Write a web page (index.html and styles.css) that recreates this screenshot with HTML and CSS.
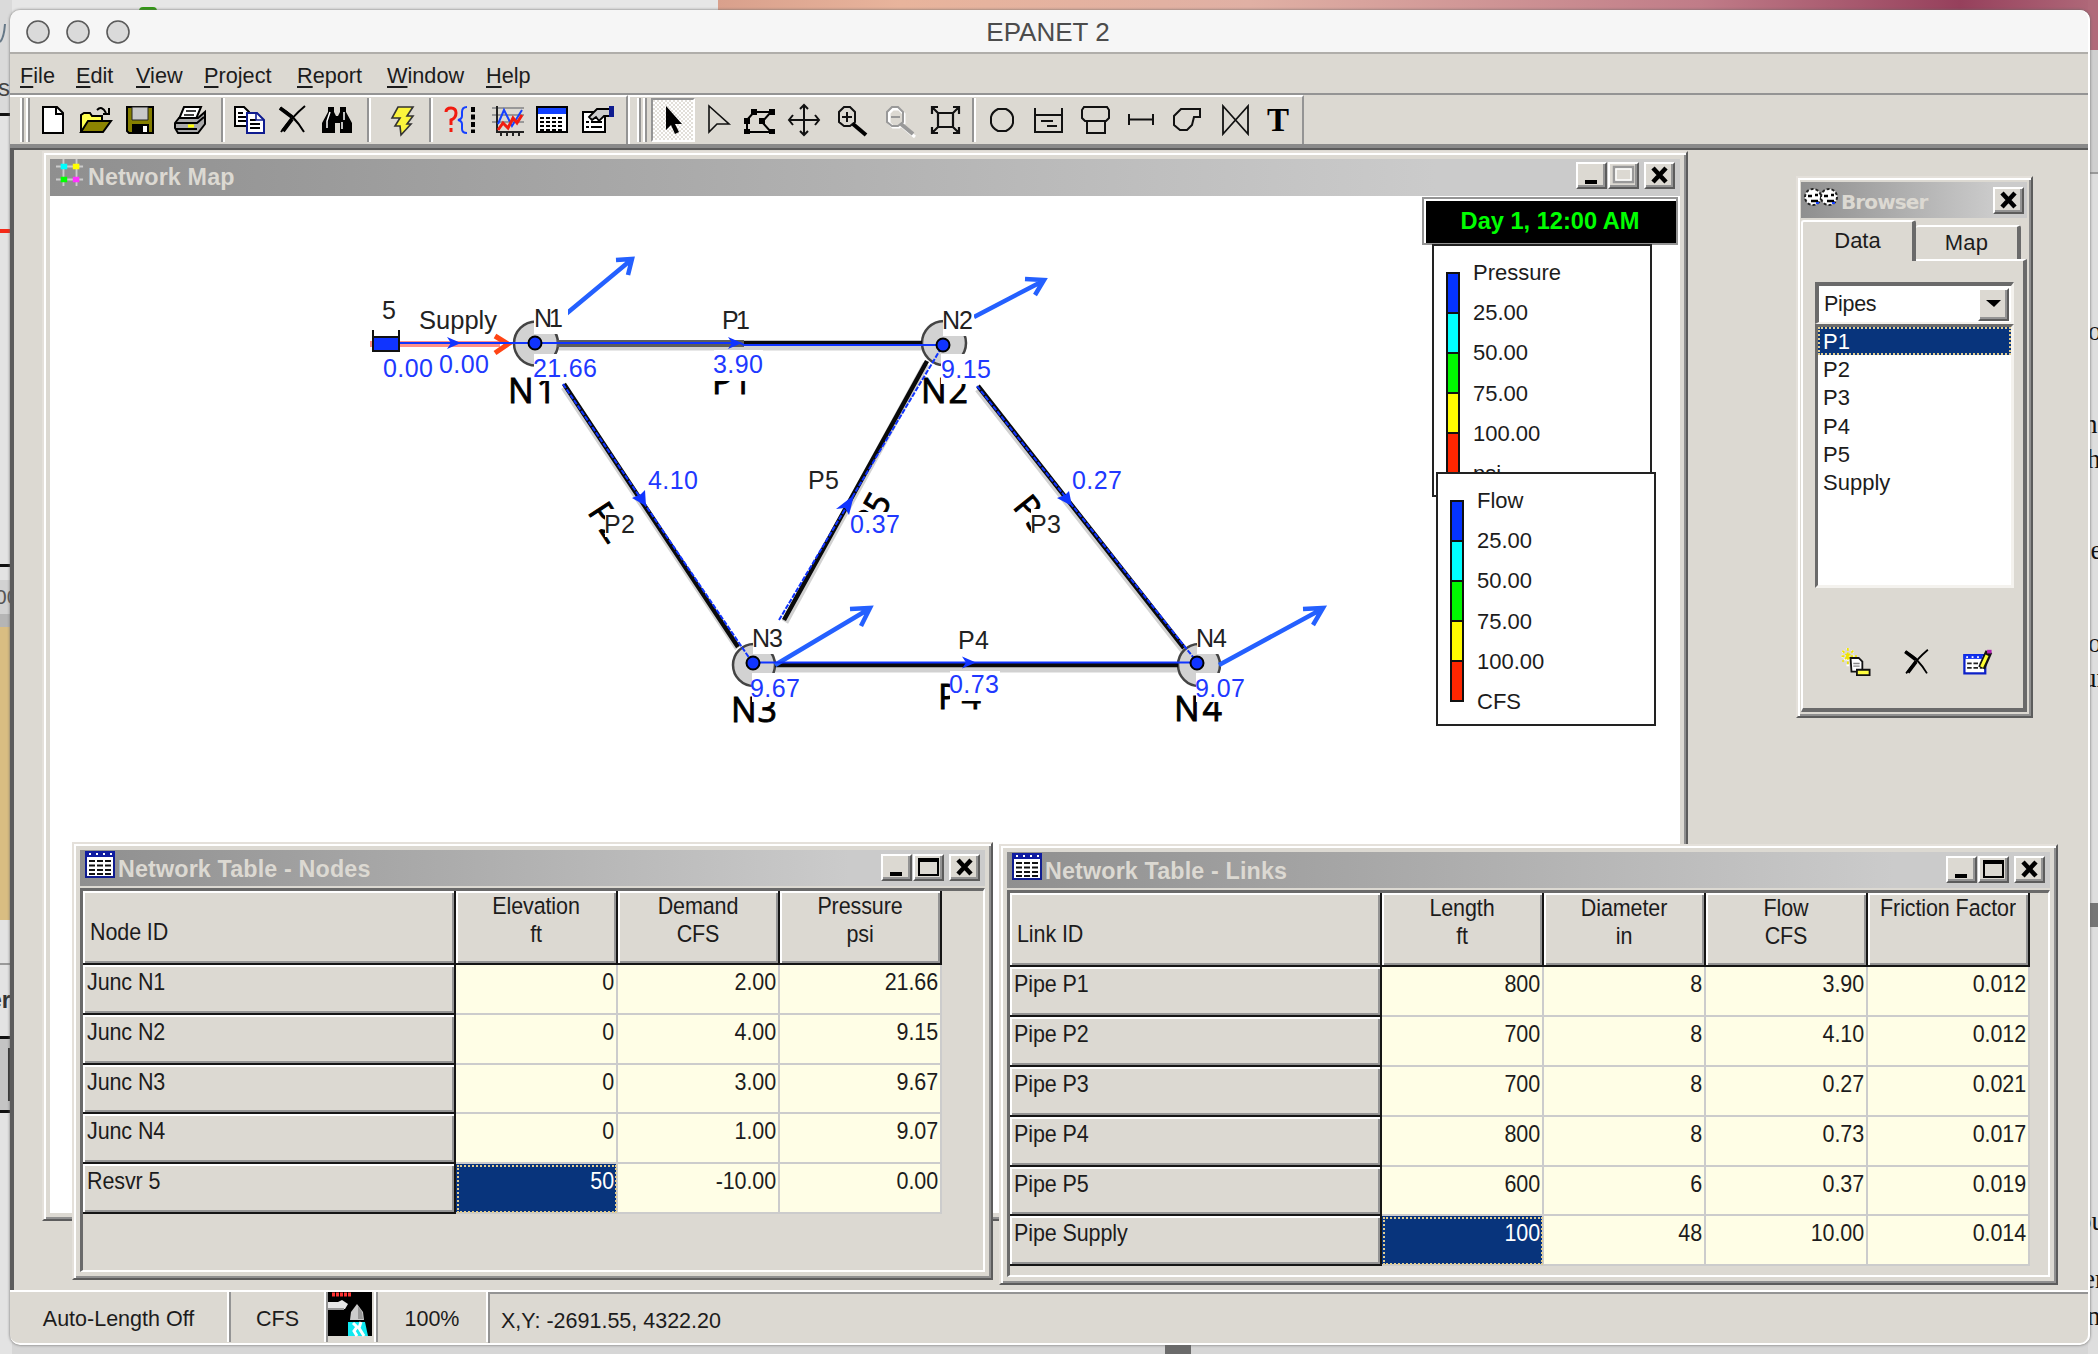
FILE: index.html
```html
<!DOCTYPE html>
<html lang="en">
<head>
<meta charset="utf-8">
<title>EPANET 2</title>
<link rel="stylesheet" href="styles.css">
</head>
<body>
<div class="backdrop">
  <div class="strip-top"></div>
  <div class="green-tab"></div>
  <svg class="edge-left" width="12" height="1354" viewBox="0 0 12 1354">
    <rect width="12" height="1354" fill="#e3e3e3"/>
    <rect y="0" width="12" height="113" fill="#dadada"/>
    <path d="M0 42Q4 38 5 24" stroke="#667887" stroke-width="2" fill="none"/>
    <text x="-2" y="96" font-size="24" fill="#444">s</text>
    <rect y="113" width="12" height="3" fill="#111"/>
    <rect y="229" width="12" height="4" fill="#f52a18"/>
    <rect y="564" width="12" height="3" fill="#111"/>
    <rect y="580" width="12" height="34" fill="#d2d2d2"/>
    <text x="-5" y="604" font-size="21" fill="#555">00</text>
    <rect y="614" width="12" height="13" fill="#b5b5b5"/>
    <rect y="627" width="12" height="293" fill="#d9bd82"/>
    <rect y="963" width="12" height="2" fill="#999"/>
    <text x="-11" y="1008" font-size="23" font-weight="bold" fill="#333">er</text>
    <rect y="1036" width="12" height="3" fill="#111"/>
    <rect y="1039" width="12" height="71" fill="#c4c4c4"/>
    <rect x="8" y="1048" width="3" height="53" fill="#333"/>
    <rect y="1110" width="12" height="3" fill="#111"/>
  </svg>
  <svg class="edge-right" width="10" height="1354" viewBox="0 0 10 1354">
    <rect width="10" height="1354" fill="#dedede"/>
    <rect width="10" height="50" fill="#b06a7a"/>
    <rect y="50" width="10" height="122" fill="#cfcfcf"/>
    <rect y="172" width="10" height="2" fill="#999"/>
    <g font-family="Liberation Serif, serif" font-size="27" fill="#111">
      <text x="0" y="340">o</text><text x="-4" y="433">n</text><text x="-1" y="468">h</text>
      <text x="-5" y="559">le</text><text x="0" y="652">o</text><text x="-5" y="687">ur</text>
      <text x="-10" y="1230">ou</text><text x="-5" y="1288">er</text><text x="-1" y="1325">n</text>
    </g>
    <rect y="903" width="10" height="24" fill="#767676"/>
  </svg>
  <div class="thumb-bottom"></div>
</div>

<div class="app">
  <header class="mac-title">
    <svg class="lights" width="120" height="26" viewBox="0 0 120 26"><g fill="#dadada" stroke="#5a5a5a" stroke-width="1.6"><circle cx="14" cy="13" r="11"/><circle cx="54" cy="13" r="11"/><circle cx="94" cy="13" r="11"/></g></svg>
    <span>EPANET 2</span>
  </header>
  <nav class="menu">
    <span><u>F</u>ile</span><span><u>E</u>dit</span><span><u>V</u>iew</span><span><u>P</u>roject</span><span><u>R</u>eport</span><span><u>W</u>indow</span><span><u>H</u>elp</span>
  </nav>
  <div class="toolbars">
    <div class="bar bar-main">
      <i class="grip"></i>
      <svg viewBox="0 0 32 32"><path d="M6 3h14l6 6v20H6z" fill="#fff" stroke="#000" stroke-width="2"/><path d="M19 3v7h7" fill="none" stroke="#000" stroke-width="2"/></svg>
      <svg viewBox="0 0 32 32"><path d="M2 28V11l3-2h6l2 3h10v5" fill="#ffff50" stroke="#000" stroke-width="2"/><path d="M2 28l7-11h23l-8 11z" fill="#8c8400" stroke="#000" stroke-width="2"/><path d="M18 6q5-5 9 3M30 4v6h-6" fill="none" stroke="#000" stroke-width="2"/></svg>
      <svg viewBox="0 0 32 32"><path d="M3 3h26v26H5l-2-2z" fill="#857f00" stroke="#000" stroke-width="2"/><path d="M8 3h16v13H8z" fill="#c8c8c8" stroke="#222" stroke-width="1"/><path d="M8 20h17v9H8z" fill="#000"/><path d="M19 22h4v6h-4z" fill="#fff"/></svg>
      <svg viewBox="0 0 32 32"><path d="M10 3h17l-5 12H5z" fill="#fff" stroke="#000" stroke-width="2"/><path d="M12 7h10M10 11h10" stroke="#000" stroke-width="1.5"/><path d="M5 14h19l7-6v12l-7 9H4l-3-5v-5z" fill="#aaa" stroke="#000" stroke-width="2"/><path d="M1 19h22l7-6M2 25h21" stroke="#000" stroke-width="2" fill="none"/><path d="M14 22h6" stroke="#ff0" stroke-width="3"/></svg>
      <i class="sep"></i>
      <svg viewBox="0 0 32 32"><path d="M2 3h9l5 5v14H2z" fill="#fff" stroke="#000" stroke-width="2"/><path d="M5 9h5M5 13h8M5 17h8" stroke="#000" stroke-width="2"/><path d="M14 9h10l7 7v13H14z" fill="#fff" stroke="#0f1c90" stroke-width="2"/><path d="M17 16h6M17 20h10M17 24h10" stroke="#000" stroke-width="2"/><path d="M23 9v7h8" fill="none" stroke="#0f1c90" stroke-width="1.6"/></svg>
      <svg viewBox="0 0 32 32"><path d="M3 4q14 7 24 24M28 2Q16 12 4 28" fill="none" stroke="#000" stroke-width="2"/><path d="M3 4l12 9M15 15L6 27" stroke="#000" stroke-width="4"/></svg>
      <svg viewBox="0 0 32 32"><path d="M7 3h6v5l2 4h2l2-4V3h6v5l6 11v10H19V19h-5v10H1V19L7 8z"/><path d="M9 8l-3 9v7M23 8v8M21 18v7" stroke="#fff" stroke-width="1.5" fill="none"/></svg>
      <i class="sep"></i>
      <svg viewBox="0 0 32 32"><path d="M12 3h15l-6 9h6l-6 8h4L15 31l-1-9H9l5-8H6z" fill="#fbf43c" stroke="#333" stroke-width="1.6"/></svg>
      <i class="sep"></i>
      <svg viewBox="0 0 32 32"><path d="M2 8q0-4 5-4t5 5-5 7v5M7 24v4" fill="none" stroke="#f21c10" stroke-width="3"/><path d="M23 3q-5 0-5 5v4q0 3-4 4 4 1 4 4v5q0 4 5 4" fill="none" stroke="#1540ff" stroke-width="2"/><path d="M29 3v26" stroke="#000" stroke-width="4" stroke-dasharray="5 2.5"/></svg>
      <svg viewBox="0 0 32 32"><path d="M0 4h32M0 11h32M0 18h32" stroke="#999" stroke-width="2"/><path d="M5 2v26h27M9 28v4M15 28v4M21 28v4M27 28v4" fill="none" stroke="#222" stroke-width="2"/><path d="M6 20l6-14 8 16L30 6" fill="none" stroke="#1540ff" stroke-width="2"/><path d="M6 26l5-7 5 5 5-10 4 5 5-8" fill="none" stroke="#f21c10" stroke-width="3"/></svg>
      <svg viewBox="0 0 32 32"><path d="M1 3h30v25H1z" fill="#fff" stroke="#000" stroke-width="2"/><path d="M2 4h28v6H2z" fill="#1040ff"/><path d="M4 14h24M4 18h24M4 22h24M4 26h24" stroke="#000" stroke-width="1.8" stroke-dasharray="4 2"/></svg>
      <svg viewBox="0 0 32 32"><path d="M1 8h22v20H1z" fill="#fff" stroke="#000" stroke-width="2"/><path d="M4 18h3M4 23h3M9 18h11M9 23h11" stroke="#000" stroke-width="2"/><path d="M7 13l8-8h13v7h-6l-5 5-3-4-4 3z" fill="#ccc" stroke="#000" stroke-width="1.8"/><path d="M27 2h5v11h-5z" fill="#0f1c90"/></svg>
    </div>
    <div class="bar bar-map">
      <i class="grip"></i>
      <b class="pressed"><svg viewBox="0 0 32 32"><path d="M9 2v24l5-5 4 9 4-2-4-8h7z"/></svg></b>
      <svg viewBox="0 0 32 32"><path d="M6 2v26l8-8h12z" fill="none" stroke="#111" stroke-width="1.6"/></svg>
      <svg viewBox="0 0 32 32"><path d="M3 28V16l7-8h17l-9 10 9 10z" fill="none" stroke="#000" stroke-width="2"/><path d="M7 5h6v6H7zM25 5h6v6h-6zM0 14h6v6H0zM15 14h6v6h-6zM0 25h6v5H0zM25 25h6v5h-6z"/></svg>
      <svg viewBox="0 0 32 32"><path d="M16 1v30M1 16h30M12 5l4-4 4 4M12 27l4 4 4-4M5 11l-4 5 4 5M27 11l4 5-4 5" fill="none" stroke="#111" stroke-width="2"/></svg>
      <svg viewBox="0 0 32 32"><path d="M8 3h6l5 5v10l-5 4H8l-5-4V8zM11 8v10M6 13h10" fill="none" stroke="#111" stroke-width="2"/><path d="M17 20l13 11" stroke="#000" stroke-width="4"/></svg>
      <svg viewBox="0 0 32 32"><path d="M9 5h6l5 5v9l-5 4H9l-4-4V9zM18 22l13 11" stroke="#fff" stroke-width="3" fill="none"/><path d="M8 3h6l5 5v10l-5 4H8l-5-4V8zM7 13h9" fill="none" stroke="#999" stroke-width="2"/><path d="M17 20l12 10" stroke="#999" stroke-width="4"/></svg>
      <svg viewBox="0 0 32 32"><path d="M8 9h15v14H8zM2 10V3h6M2 3l6 6M29 10V3h-6M29 3l-6 6M2 23v6h6M2 29l6-6M29 23v6h-6M29 29l-6-6" fill="none" stroke="#111" stroke-width="2.2"/></svg>
      <i class="sep"></i>
      <svg viewBox="0 0 32 32"><path d="M12 5h8q6 3 7 8v6q-1 5-7 8h-8q-6-3-7-8v-6q1-5 7-8z" fill="none" stroke="#111" stroke-width="2"/></svg>
      <svg viewBox="0 0 32 32"><path d="M3 4v24h27V4M3 11h27M9 17h12M15 22h10" fill="none" stroke="#111" stroke-width="2"/></svg>
      <svg viewBox="0 0 32 32"><path d="M4 3h23l2 3v8l-3 3H5l-3-3V6zM7 17h18v12H7z" fill="none" stroke="#111" stroke-width="2"/></svg>
      <svg viewBox="0 0 32 32"><path d="M4 10v11M28 10v11M4 15.500h24" fill="none" stroke="#111" stroke-width="2"/></svg>
      <svg viewBox="0 0 32 32"><path d="M11 5h19v8h-6l-2 8-5 5h-7l-6-5v-9z" fill="none" stroke="#111" stroke-width="2"/></svg>
      <svg viewBox="0 0 32 32"><path d="M4 2v28L29 2v28z" fill="none" stroke="#111" stroke-width="1.8"/></svg>
      <span class="tee">T</span>
    </div>
  </div>

  <main class="mdi">
    <section class="win map-win">
      <div class="cap">
        <svg class="ico" viewBox="0 0 30 30"><path d="M8 0v29M22 0v29M0 8h29M0 22h29" stroke="#ccc" stroke-width="2"/><path d="M5 5h7v6H5z" fill="#0ff"/><path d="M18 5h7v6h-7z" fill="#ff0"/><path d="M5 19h7v6H5z" fill="#0f0"/><path d="M18 19h7v6h-7z" fill="#f3f"/></svg>
        <h2>Network Map</h2>
        <b class="btn"><svg viewBox="0 0 24 20"><path d="M5 17h12" stroke="#000" stroke-width="4"/></svg></b><b class="btn"><svg viewBox="0 0 24 20"><path d="M2 2h19v15H2z" fill="none" stroke="#999" stroke-width="2.500"/><path d="M4 4h15v11H4z" fill="none" stroke="#fff" stroke-width="1.5"/></svg></b><b class="btn close"><svg viewBox="0 0 24 20"><path d="M5 3l13 14M18 3L5 17" stroke="#000" stroke-width="4.500"/></svg></b>
      </div>
      <div class="map">
        <svg class="net" viewBox="50 195 1630 1018" width="1630" height="1018">
          <g stroke="#000" stroke-opacity=".18" stroke-width="7" fill="none">
            <path d="M557 347H922M775 669H1178M564 387L738 648M785 622L926 364M978 389L1184 651"/>
          </g>
          <g fill="#d2d2d2" stroke="#444" stroke-width="2.500">
            <circle cx="536" cy="343.500" r="22"/><circle cx="944" cy="343" r="22"/><circle cx="754" cy="665" r="21"/><circle cx="1199" cy="665" r="21"/>
          </g>
          <path d="M370 344H500" stroke="#ff9088" stroke-width="6"/>
          <path d="M495 336L508 344L495 353" fill="none" stroke="#ff4515" stroke-width="5"/>
          <path d="M557 343.500H744" stroke="#5c5c5c" stroke-width="7"/>
          <g stroke="#0a0a0a" stroke-width="4.500" fill="none">
            <path d="M744 343H922M775 665H1178M564 384L738 647M784 620L927 361M978 386L1184 648"/>
          </g>
          <g stroke="#2460ff" stroke-width="4.500" fill="none">
            <path d="M566 314L631 260M616 260L632 259L628 275M974 317L1043 281M1025 279L1044 280L1035 295M775 665L869 609M850 609L870 608L861 626M1219 665L1322 609M1303 609L1323 608L1313 625"/>
          </g>
          <g font-family="Open Sans, sans-serif" font-size="34" fill="#000" stroke="#000" stroke-width=".9">
            <text x="508" y="403" textLength="48">N1</text><text x="921" y="403" textLength="47">N2</text><text x="731" y="722" textLength="46">N3</text><text x="1174" y="721" textLength="48">N4</text>
            <text x="712" y="394" textLength="40">P1</text><text x="938" y="709" textLength="43">P4</text>
            <text transform="translate(587 512) rotate(57)">P2</text><text transform="translate(1012 507) rotate(51)">P3</text><text transform="translate(873 536) rotate(-61)">P5</text>
          </g>
          <g fill="#fff">
            <path d="M534 305h34v29h-34zM943 306h31v30h-31zM753 624h32v30h-32zM1197 624h32v30h-32zM534 354h66v27h-66zM714 350h49v31h-49zM941 354h51v30h-51zM752 673h48v29h-48zM1196 673h48v29h-48zM950 671h50v30h-50zM850 512h51v27h-51zM605 509h30v28h-30zM1031 509h30v28h-30z"/>
          </g>
          <g stroke="#1034ff" stroke-width="2" fill="none">
            <path d="M372 343H535M535 343H740L744 345H943M752 662.500H1197"/>
            <path d="M563 384L752 662M779 620L943 345M977 386L1197 662" stroke-dasharray="5 1.500"/>
          </g>
          <g fill="#1034ff">
            <path d="M447 337l14 6-14 6 4-6zM728 337l14 6-14 6 4-6zM962 656.500l14 6-14 6 4-6zM646 506l-1-16-4 4-9 4zM854 495l-18 14 9-1 4 7zM1072 506l-3-15-4 4-8 3z"/>
          </g>
          <path d="M373 330V350H399V330" fill="none" stroke="#111" stroke-width="2"/><path d="M373 337h26v14h-26z" fill="#1034ff" stroke="#111" stroke-width="2"/>
          <g fill="#1034ff" stroke="#000" stroke-width="2"><circle cx="535" cy="343" r="6.500"/><circle cx="943" cy="345" r="6.500"/><circle cx="753" cy="663" r="6.500"/><circle cx="1197" cy="663" r="6.500"/></g>
          <g class="lbl" fill="#222">
            <text x="382" y="319">5</text><text x="419" y="329" textLength="78" lengthAdjust="spacingAndGlyphs">Supply</text>
            <text x="534" y="327" textLength="29">N1</text><text x="942" y="329" textLength="31">N2</text><text x="752" y="647" textLength="31">N3</text><text x="1196" y="647" textLength="31">N4</text>
            <text x="722" y="329" textLength="28">P1</text><text x="604" y="533" textLength="31">P2</text><text x="1030" y="533" textLength="31">P3</text><text x="958" y="649" textLength="31">P4</text><text x="808" y="489" textLength="31">P5</text>
          </g>
          <g class="lbl" fill="#2038ff">
            <text x="383" y="377" textLength="50">0.00</text><text x="439" y="373" textLength="50">0.00</text><text x="533" y="377" textLength="64">21.66</text><text x="713" y="373" textLength="50">3.90</text><text x="941" y="378" textLength="50">9.15</text>
            <text x="648" y="489" textLength="50">4.10</text><text x="850" y="533" textLength="50">0.37</text><text x="1072" y="489" textLength="50">0.27</text><text x="750" y="697" textLength="50">9.67</text><text x="949" y="693" textLength="50">0.73</text><text x="1195" y="697" textLength="50">9.07</text>
          </g>
        </svg>
        <div class="clock">Day 1, 12:00 AM</div>
        <div class="legend l-press"><i class="scale"><i></i><i></i><i></i><i></i><i></i></i><ul><li>Pressure</li><li>25.00</li><li>50.00</li><li>75.00</li><li>100.00</li><li>psi</li></ul></div>
        <div class="legend l-flow"><i class="scale"><i></i><i></i><i></i><i></i><i></i></i><ul><li>Flow</li><li>25.00</li><li>50.00</li><li>75.00</li><li>100.00</li><li>CFS</li></ul></div>
      </div>
    </section>

    <section class="win nodes-win">
      <div class="cap">
        <svg class="ico" viewBox="0 0 30 28"><path d="M1 1h28v25H1z" fill="#fff" stroke="#0f1c90" stroke-width="2"/><path d="M0 0h30v6H0z" fill="#0f1ca0"/><path d="M4 3h24" stroke="#fff" stroke-width="2" stroke-dasharray="2 5"/><path d="M4 10h23M4 14.500h23M4 19h23M4 23h23" stroke="#111" stroke-width="2" stroke-dasharray="6 2"/></svg>
        <h2>Network Table - Nodes</h2>
        <b class="btn"><svg viewBox="0 0 24 20"><path d="M5 17h12" stroke="#000" stroke-width="4"/></svg></b><b class="btn"><svg viewBox="0 0 24 20"><path d="M2 2h19v16H2z" fill="none" stroke="#000" stroke-width="2"/><path d="M1 3h21" stroke="#000" stroke-width="4"/></svg></b><b class="btn close"><svg viewBox="0 0 24 20"><path d="M5 3l13 14M18 3L5 17" stroke="#000" stroke-width="4.500"/></svg></b>
      </div>
      <div class="sheet">
        <div class="grid g-nodes">
          <div class="h id"><span>Node ID</span></div><div class="h"><span>Elevation<br>ft</span></div><div class="h"><span>Demand<br>CFS</span></div><div class="h"><span>Pressure<br>psi</span></div>
          <div class="r"><span>Junc N1</span></div><div class="c"><span>0</span></div><div class="c"><span>2.00</span></div><div class="c"><span>21.66</span></div>
          <div class="r"><span>Junc N2</span></div><div class="c"><span>0</span></div><div class="c"><span>4.00</span></div><div class="c"><span>9.15</span></div>
          <div class="r"><span>Junc N3</span></div><div class="c"><span>0</span></div><div class="c"><span>3.00</span></div><div class="c"><span>9.67</span></div>
          <div class="r"><span>Junc N4</span></div><div class="c"><span>0</span></div><div class="c"><span>1.00</span></div><div class="c"><span>9.07</span></div>
          <div class="r"><span>Resvr 5</span></div><div class="c sel"><span>50</span></div><div class="c"><span>-10.00</span></div><div class="c"><span>0.00</span></div>
        </div>
      </div>
    </section>

    <section class="win links-win">
      <div class="cap">
        <svg class="ico" viewBox="0 0 30 28"><path d="M1 1h28v25H1z" fill="#fff" stroke="#0f1c90" stroke-width="2"/><path d="M0 0h30v6H0z" fill="#0f1ca0"/><path d="M4 3h24" stroke="#fff" stroke-width="2" stroke-dasharray="2 5"/><path d="M4 10h23M4 14.500h23M4 19h23M4 23h23" stroke="#111" stroke-width="2" stroke-dasharray="6 2"/></svg>
        <h2>Network Table - Links</h2>
        <b class="btn"><svg viewBox="0 0 24 20"><path d="M5 17h12" stroke="#000" stroke-width="4"/></svg></b><b class="btn"><svg viewBox="0 0 24 20"><path d="M2 2h19v16H2z" fill="none" stroke="#000" stroke-width="2"/><path d="M1 3h21" stroke="#000" stroke-width="4"/></svg></b><b class="btn close"><svg viewBox="0 0 24 20"><path d="M5 3l13 14M18 3L5 17" stroke="#000" stroke-width="4.500"/></svg></b>
      </div>
      <div class="sheet">
        <div class="grid g-links">
          <div class="h id"><span>Link ID</span></div><div class="h"><span>Length<br>ft</span></div><div class="h"><span>Diameter<br>in</span></div><div class="h"><span>Flow<br>CFS</span></div><div class="h"><span>Friction Factor<br>&nbsp;</span></div>
          <div class="r"><span>Pipe P1</span></div><div class="c"><span>800</span></div><div class="c"><span>8</span></div><div class="c"><span>3.90</span></div><div class="c"><span>0.012</span></div>
          <div class="r"><span>Pipe P2</span></div><div class="c"><span>700</span></div><div class="c"><span>8</span></div><div class="c"><span>4.10</span></div><div class="c"><span>0.012</span></div>
          <div class="r"><span>Pipe P3</span></div><div class="c"><span>700</span></div><div class="c"><span>8</span></div><div class="c"><span>0.27</span></div><div class="c"><span>0.021</span></div>
          <div class="r"><span>Pipe P4</span></div><div class="c"><span>800</span></div><div class="c"><span>8</span></div><div class="c"><span>0.73</span></div><div class="c"><span>0.017</span></div>
          <div class="r"><span>Pipe P5</span></div><div class="c"><span>600</span></div><div class="c"><span>6</span></div><div class="c"><span>0.37</span></div><div class="c"><span>0.019</span></div>
          <div class="r"><span>Pipe Supply</span></div><div class="c sel"><span>100</span></div><div class="c"><span>48</span></div><div class="c"><span>10.00</span></div><div class="c"><span>0.014</span></div>
        </div>
      </div>
    </section>

    <section class="win browser-win">
      <div class="cap">
        <svg class="ico" viewBox="0 0 34 22"><g fill="#fff" stroke="#222" stroke-width="2" stroke-dasharray="3 2"><circle cx="9" cy="10" r="8"/><circle cx="25" cy="10" r="8"/></g><path d="M4 9h4M11 8h3M20 9h4M27 8h3M7 14h7M23 14h7" stroke="#000" stroke-width="2.500"/><path d="M12 16h3M28 16h3" stroke="#1540ff" stroke-width="2"/></svg>
        <h2>Browser</h2>
        <b class="btn close"><svg viewBox="0 0 24 20"><path d="M5 3l13 14M18 3L5 17" stroke="#000" stroke-width="4.500"/></svg></b>
      </div>
      <div class="tabs"><span class="on">Data</span><span>Map</span></div>
      <div class="pane">
        <div class="combo"><span>Pipes</span><b class="btn drop"><svg viewBox="0 0 24 20"><path d="M4 6h15l-7 7z"/></svg></b></div>
        <ul class="list"><li class="on">P1</li><li>P2</li><li>P3</li><li>P4</li><li>P5</li><li>Supply</li></ul>
        <div class="acts">
          <svg viewBox="0 0 32 32"><path d="M7 0v20M0 9h17M1 3l13 13M13 3L1 15" stroke="#fff" stroke-width="3" stroke-dasharray="2 4"/><path d="M7 0v20M0 9h17M1 3l13 13M13 3L1 15" stroke="#f0e400" stroke-width="2" stroke-dasharray="3 2"/><path d="M10 11h9l4 4v11H11z" fill="#fff" stroke="#111" stroke-width="2"/><path d="M13 17h7M13 20h7" stroke="#888" stroke-width="1.600"/><path d="M17 24h14v6H17z" fill="#ffff40" stroke="#111" stroke-width="2"/></svg>
          <svg viewBox="0 0 32 32"><path d="M3 4q14 7 24 24M28 2Q16 12 4 28" fill="none" stroke="#000" stroke-width="2"/><path d="M3 4l12 9M15 15L6 27" stroke="#000" stroke-width="4"/></svg>
          <svg viewBox="0 0 32 32"><path d="M1 8h23v20H1z" fill="#fff" stroke="#0c20c8" stroke-width="2.500"/><path d="M0 7h25v5H0z" fill="#1030f0"/><path d="M3 10h20" stroke="#fff" stroke-width="2" stroke-dasharray="2 4"/><path d="M4 17h17M4 22h17" stroke="#222" stroke-width="2" stroke-dasharray="5 2"/><path d="M28 4l-8 18" stroke="#111" stroke-width="8"/><path d="M26 8l-6 13" stroke="#ff3" stroke-width="3.500"/><path d="M26 2h5v4h-5z" fill="#b020b0"/></svg>
        </div>
      </div>
    </section>
  </main>

  <footer class="status">
    <span class="s1">Auto-Length Off</span><span class="s2">CFS</span>
    <span class="s3"><svg viewBox="0 0 44 44" width="44" height="44"><path d="M0 0h44v44H0z"/><path d="M4 2.500h19" stroke="#f33" stroke-width="4" stroke-dasharray="3 1"/><path d="M0 10h10l4-2 6 4-3 5H0z" fill="#e8e8e8"/><path d="M0 17h16" stroke="#999" stroke-width="2"/><path d="M29 12l6 8 1 8H22l1-8z" fill="#ccc"/><path d="M30 14l4 6 1 7h-5z" fill="#999"/><path d="M20 30h17l3 14H20z" fill="#10e8f0"/><path d="M25 31l4 4-3 4 3 5M33 30l-2 6 5 8" stroke="#fff" stroke-width="3" fill="none"/></svg></span>
    <span class="s4">100%</span><span class="s5">X,Y: -2691.55, 4322.20</span>
  </footer>
</div>
</body>
</html>
```
FILE: styles.css
```css
* { box-sizing: border-box; }
body { margin: 0; width: 2098px; height: 1354px; overflow: hidden; position: relative; background: #d6d6d6; font-family: "Liberation Sans", Arial, sans-serif; font-size: 22px; color: #1c1c1c; }
h2, ul { margin: 0; padding: 0; list-style: none; }
svg { display: block; flex: none; overflow: visible; }

/* desktop behind the application */
.backdrop { position: absolute; inset: 0; }
.strip-top { height: 30px; background: linear-gradient(90deg, #e6e6e6 0 718px, #d9a08c 718px, #e8b49c 900px, #e0b0a4 1250px, #c07c88 1700px, #96405c 1960px, #b06a7a 2098px); }
.green-tab { position: absolute; left: 139px; top: 7px; width: 18px; height: 6px; border-radius: 4px 4px 0 0; background: #2f9a10; }
.edge-left { position: absolute; left: 0; top: 0; overflow: hidden; }
.edge-right { position: absolute; right: 0; top: 0; overflow: hidden; }
.thumb-bottom { position: absolute; left: 1165px; bottom: 0; width: 26px; height: 9px; background: #6b6b6b; }

/* application frame */
.app { position: absolute; left: 10px; top: 10px; width: 2080px; height: 1335px; display: flex; flex-direction: column; background: #dcd9d2; border-radius: 10px; overflow: hidden; box-shadow: 0 0 3px #666; }
.app::after { content: ""; position: absolute; inset: 0; border-right: 2px solid #fff; border-bottom: 2px solid #fff; border-radius: 10px; pointer-events: none; }
.mac-title { height: 44px; flex: none; display: flex; align-items: center; justify-content: center; position: relative; background: #f6f6f6; border-bottom: 2px solid #b0aeaa; font-size: 26px; color: #4c4c4c; padding: 2px 4px 0 0; }
.lights { position: absolute; left: 14px; top: 9px; }
.menu { height: 39px; flex: none; display: grid; grid-template-columns: 56px 60px 68px 93px 90px 99px 60px; padding: 10px 0 0 10px; line-height: 24px; font-size: 21.7px; }
.menu u { text-decoration-thickness: 2px; text-underline-offset: 3px; }
.toolbars { height: 57px; flex: none; display: flex; align-items: stretch; border-top: 2px solid #949494; border-bottom: 6px solid #8a8a8a; position: relative; }
.toolbars::after { content: ""; position: absolute; left: 0; right: 0; bottom: -6px; height: 2px; background: #5c5c5c; }
.bar { display: grid; align-items: center; border-top: 2px solid #fff; border-right: 2px solid #949494; padding-bottom: 1px; }
.bar svg { width: 32px; height: 32px; }
.bar-main { width: 618px; padding-left: 10px; grid-template-columns: 17px 42px 45px 50px 47px 12px 44px 44px 46px 19px 43px 15px 48px 44px 46px 43px; }
.bar-map { width: 676px; border-left: 2px solid #fff; padding-left: 7px; grid-template-columns: 14px 52px 41px 44px 48px 48px 46px 42px 14px 46px 48px 45px 45px 49px 43px 41px; }
.grip { width: 10px; height: 44px; border-left: 2px solid #fff; border-right: 2px solid #949494; background: linear-gradient(90deg, #949494 0 2px, #dcd9d2 2px 4px, #fff 4px 6px); }
.sep { width: 4px; height: 44px; background: linear-gradient(90deg, #949494 50%, #fff 50%); }
.pressed { width: 44px; height: 44px; border: 2px solid; border-color: #949494 #fff #fff #949494; background: repeating-conic-gradient(#fff 0 25%, #e2dfd9 0 50%) 0 0 / 4px 4px; padding: 4px; }
.tee { font: bold 33px "Liberation Serif", serif; color: #000; padding-left: 5px; line-height: 36px; }

/* MDI child windows */
.mdi { flex: 1; position: relative; border-left: 4px solid #5c5c5c; }
.win { position: absolute; background: #dcd9d2; border: 2px solid; border-color: #e4e0da #5c5c5c #5c5c5c #e4e0da; box-shadow: inset 2px 2px 0 #fff, inset -2px -2px 0 #8f8f8f; padding: 6px; display: flex; flex-direction: column; }
.cap { height: 36px; flex: none; display: flex; align-items: center; background: linear-gradient(90deg, #8f8f8f, #cbcbcb 85%); padding: 0 5px 2px; }
.cap h2 { flex: 1; font-size: 23.3px; line-height: 30px; color: #dcd9d2; padding: 3px 0 0 3px; white-space: nowrap; letter-spacing: .15px; }
.ico { width: 30px; height: 28px; margin-top: -5px; }
.btn { width: 31px; height: 27px; flex: none; background: #dcd9d2; border: 2px solid; border-color: #fff #5c5c5c #5c5c5c #fff; box-shadow: inset -2px -2px 0 #949494; padding: 1px 2px; }
.btn svg { width: 24px; height: 20px; }
.btn + .btn { margin-left: 1px; }
.btn + .close { margin-left: 5px; }
.map-win { left: 28px; top: 1px; width: 1646px; height: 1070px; padding: 6px 6px 6px 6px; }
.map-win .cap { height: 37px; padding-bottom: 4px; }
.map { flex: 1; position: relative; background: #fff; }
.net { position: absolute; left: 0; top: -1px; }
.lbl { font-size: 25px; }
.clock { position: absolute; left: 1372px; top: 1px; width: 256px; height: 48px; border: 2px solid #949494; box-shadow: inset 2px 2px 0 #fff; background: #000; color: #0f0; font-weight: bold; font-size: 23.6px; line-height: 44px; text-align: center; }
.legend { position: absolute; width: 220px; border: 2px solid #222; background: #fff; display: flex; gap: 13px; padding: 26px 0 0 12px; }
.l-press { left: 1382px; top: 48px; height: 253px; }
.l-flow { left: 1386px; top: 276px; height: 254px; }
.scale { width: 14px; height: 202px; border: 1px solid #111; display: flex; flex-direction: column; }
.scale i { flex: 1; border: 1px solid #111; background: #0433ff; }
.scale i:nth-child(2) { background: #0ff; }
.scale i:nth-child(3) { background: #00f900; }
.scale i:nth-child(4) { background: #fffb00; }
.scale i:nth-child(5) { background: #ff2600; }
.legend ul { margin-top: -19px; font-size: 22px; }
.legend li { height: 40.2px; line-height: 40.2px; }

.nodes-win { left: 58px; top: 692px; width: 921px; height: 438px; }
.links-win { left: 985px; top: 694px; width: 1059px; height: 441px; }
.sheet { flex: 1; margin-top: 2px; border: 3px solid; border-color: #6a6a6a #fff #fff #6a6a6a; border-right-width: 2px; border-bottom-width: 2px; }
.grid { display: grid; }
.g-nodes { width: 859px; grid-template-columns: 373px 162px 162px 162px; grid-template-rows: 74px repeat(5, 49.8px); }
.g-links { width: 1020px; grid-template-columns: 372px repeat(4, 162px); grid-template-rows: 74px repeat(6, 49.9px); }
.grid span { display: block; font-size: 21.500px; line-height: 24px; transform: scaleY(1.14); letter-spacing: -.1px; }
.h, .r { border-right: 2px solid #151515; border-bottom: 2px solid #151515; box-shadow: inset 2px 2px 0 #fff, inset -2px -2px 0 #949494; }
.h { text-align: center; padding-top: 5px; }
.id { text-align: left; padding: 29px 0 0 7px; }
.r { padding: 5px 0 0 4px; }
.c { background: #fffee6; border-right: 2px solid #cccccc; border-bottom: 2px solid #cccccc; text-align: right; padding: 5px 2px 0 0; color: #1c1c1c; }
.sel { background: #08347c; color: #fff; outline: 2px dotted #e0cc90; outline-offset: -3px; }

.browser-win { left: 1782px; top: 26px; width: 237px; height: 542px; padding: 4px 4px 4px 3px; }
.browser-win .cap { padding: 0 3px 0 3px; }
.browser-win .ico { width: 34px; height: 22px; }
.browser-win h2 { font-family: "DejaVu Sans", sans-serif; font-size: 20px; letter-spacing: -.9px; padding-top: 3px; }
.tabs { display: flex; align-items: flex-end; height: 40px; flex: none; margin-top: 1px; position: relative; }
.tabs span { height: 34px; width: 105px; text-align: center; border-top: 2px solid #fff; border-right: 4px solid #6a6a6a; border-radius: 3px 3px 0 0; line-height: 31px; letter-spacing: .3px; }
.tabs .on { height: 41px; width: 115px; border-left: 2px solid #fff; line-height: 38px; margin-bottom: -2px; background: #dcd9d2; position: relative; letter-spacing: 0; }
.pane { flex: 1; border: 2px solid #fff; border-right: 4px solid #6a6a6a; border-bottom: 4px solid #6a6a6a; padding: 21px 9px 0 12px; }
.combo { height: 42px; display: flex; align-items: center; background: #fff; border: 4px solid; border-width: 4px 3px 2px 4px; border-color: #6a6a6a #f4f2ee #f4f2ee #6a6a6a; padding-left: 5px; font-size: 21.500px; }
.combo span { flex: 1; letter-spacing: -.3px; }
.drop { height: 33px; padding-top: 4px; margin-right: 2px; }
.list { height: 264px; background: #fff; border: 3px solid; border-color: #6a6a6a #f4f2ee #f4f2ee #6a6a6a; }
.list li { height: 28.2px; line-height: 29px; padding-left: 5px; }
.list .on { background: #08347c; color: #fff; outline: 2px dotted #e0cc90; outline-offset: -2px; }
.acts { display: flex; justify-content: space-between; padding: 60px 20px 0 25px; }
.acts svg { width: 32px; height: 29px; }

.status { height: 55px; flex: none; border-top: 2px solid #fff; display: grid; grid-template-columns: 219px 97px 50px 112px 1fr; line-height: 54px; font-size: 21.500px; }
.status span { border-right: 2px solid #fff; border-left: 2px solid #949494; text-align: center; height: 50px; white-space: nowrap; }
.status .s1 { border-left: 0; }
.status .s5 { text-align: left; border-top: 2px solid #949494; padding-left: 11px; height: 53px; }
```
